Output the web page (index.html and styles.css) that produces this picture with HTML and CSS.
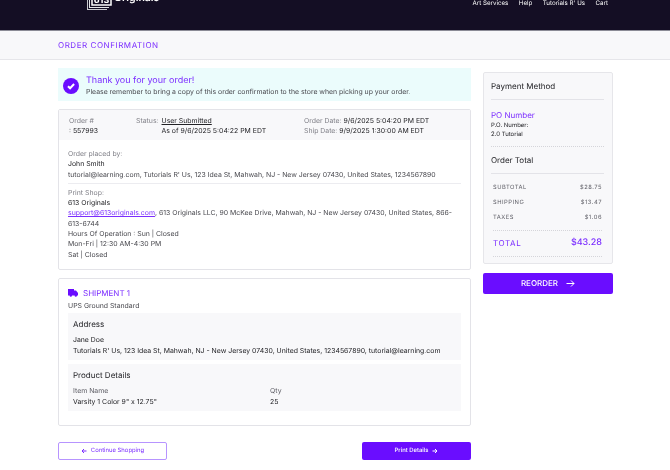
FILE: index.html
```html
<!DOCTYPE html>
<html lang="en">
<head>
  <meta charset="UTF-8">
  <title>Order Confirmation</title>
  <link rel="stylesheet" href="styles.css">
</head>
<body>
  <div class="header">
    <div class="logo">
      <svg class="logo-mark" width="25" height="22" viewBox="0 0 25 22">
        <path d="M0 5h1v16h19v1H0z" fill="#c9c9cf"/>
        <path d="M2 3h1v16h19v1H2z" fill="#e4e4e8"/>
        <rect x="5" y="0" width="19" height="17" fill="#140e24" stroke="#fff" stroke-width="1.500"/>
        <text class="logo-num" x="14.500" y="15" text-anchor="middle">613</text>
      </svg>
      <span class="logo-text">Originals</span>
    </div>
    <div class="nav">
      <span>Art Services</span>
      <span>Help</span>
      <span>Tutorials R' Us</span>
      <span>Cart</span>
    </div>
  </div>

  <div class="title-bar">ORDER CONFIRMATION</div>

  <div class="content">
    <div class="main">
      <div class="thanks">
        <div class="check">
          <svg width="10" height="10" viewBox="0 0 10 10"><path d="M2 5.200l2.100 2.100 4-4.300" fill="none" stroke="#fff" stroke-width="2"/></svg>
        </div>
        <div class="thanks-copy">
          <div class="thanks-title">Thank you for your order!</div>
          <div class="thanks-text">Please remember to bring a copy of this order confirmation to the store when picking up your order.</div>
        </div>
      </div>

      <div class="card order-card">
        <div class="order-head">
          <div class="col-order">
            <span class="label">Order #</span><br>
            : 557993
          </div>
          <div class="col-status">
            <span class="label">Status:</span>
            <div>
              <u>User Submitted</u><br>
              As of 9/6/2025 5:04:22 PM EDT
            </div>
          </div>
          <div class="col-dates">
            <span class="label">Order Date:</span> 9/6/2025 5:04:20 PM EDT<br>
            <span class="label">Ship Date:</span> 9/9/2025 1:30:00 AM EDT
          </div>
        </div>
        <div class="order-body">
          <div class="block placed">
            <span class="label">Order placed by:</span><br>
            <span class="name">John Smith</span><br>
            <span class="muted">tutorial@learning.com, Tutorials R' Us, 123 Idea St, Mahwah, NJ - New Jersey 07430, United States, 1234567890</span>
          </div>
          <div class="block">
            <span class="label">Print Shop:</span><br>
            <span class="name">613 Originals</span><br>
            <span class="muted"><a href="#">support@613originals.com</a>, 613 Originals LLC, 90 McKee Drive, Mahwah, NJ - New Jersey 07430, United States, 866-613-6744<br>
            Hours Of Operation : Sun | Closed<br>
            Mon-Fri | 12:30 AM-4:30 PM<br>
            Sat | Closed</span>
          </div>
        </div>
      </div>

      <div class="card shipment">
        <div class="ship-title">
          <svg width="10" height="8" viewBox="0 0 10 8"><path d="M0 0h6v1.500h2L10 4v2.500H9a1.200 1.200 0 0 1-2.400 0H4a1.200 1.200 0 0 1-2.400 0H0z" fill="#6a0dff"/></svg>
          SHIPMENT 1
        </div>
        <div class="ship-method">UPS Ground Standard</div>
        <div class="panel">
          <div class="panel-title">Address</div>
          <div class="panel-text">Jane Doe<br>Tutorials R' Us, 123 Idea St, Mahwah, NJ - New Jersey 07430, United States, 1234567890, tutorial@learning.com</div>
        </div>
        <div class="panel">
          <div class="panel-title">Product Details</div>
          <div class="items">
            <span class="item-label">Item Name</span>
            <span class="item-label">Qty</span>
            <span>Varsity 1 Color 9" x 12.75"</span>
            <span>25</span>
          </div>
        </div>
      </div>

      <div class="actions">
        <a class="btn btn-outline" href="#">
          <svg width="6" height="6" viewBox="0 0 6 6"><path d="M5.500 3H1M3 1L1 3l2 2" fill="none" stroke="currentColor"/></svg>
          Continue Shopping
        </a>
        <a class="btn btn-solid" href="#">
          Print Details
          <svg width="6" height="6" viewBox="0 0 6 6"><path d="M.5 3H5M3 1l2 2-2 2" fill="none" stroke="currentColor"/></svg>
        </a>
      </div>
    </div>

    <div class="side">
      <div class="summary">
        <div class="summary-title">Payment Method</div>
        <div class="po">
          <div class="po-title">PO Number</div>
          <div class="po-text">P.O. Number:<br>2.0 Tutorial</div>
        </div>
        <div class="summary-title">Order Total</div>
        <div class="totals">
          <div class="row"><span>SUBTOTAL</span><span>$28.75</span></div>
          <div class="row"><span>SHIPPING</span><span>$13.47</span></div>
          <div class="row"><span>TAXES</span><span>$1.06</span></div>
        </div>
        <div class="grand"><span>TOTAL</span><span class="grand-value">$43.28</span></div>
      </div>
      <a class="reorder" href="#">
        REORDER
        <svg width="9" height="9" viewBox="0 0 9 9"><path d="M.5 4.500H8M5 1.500l3 3-3 3" fill="none" stroke="currentColor"/></svg>
      </a>
    </div>
  </div>
</body>
</html>
```

FILE: styles.css
```css
* {
  box-sizing: border-box;
}

html,
body {
  height: 470px;
  overflow: hidden;
}

body {
  margin: 0;
  background: white;
  color: #222226;
  font-family: Inter, "Liberation Sans", sans-serif;
  font-size: 6.900px;
  line-height: 10.300px;
  text-rendering: geometricPrecision;
}

/* the reference is a scaled down capture, so its edges are a little soft */
.header,
.title-bar,
.content {
  filter: blur(0.3px);
}

.header {
  height: 31px;
  background: #140e24;
  border-bottom: 1px solid #8b8b96;
  display: flex;
  justify-content: space-between;
  padding: 0 62px 0 87px;
  overflow: hidden;
  color: white;
}

.logo {
  display: flex;
  align-items: flex-start;
  margin-top: -12px;
}

.logo-num {
  fill: white;
  font-size: 9px;
  font-weight: 700;
}

.logo-text {
  margin: 5px 0 0 2px;
  font-size: 10.500px;
  font-weight: 600;
  line-height: 10px;
}

.nav {
  display: flex;
  gap: 10.500px;
  font-size: 6.200px;
  line-height: 7px;
}

.title-bar {
  height: 29px;
  background: #f8f8fa;
  border-bottom: 1px solid #e6e6ea;
  padding: 9px 0 0 58px;
  color: #7b2dff;
  font-size: 8px;
  letter-spacing: 0.550px;
}

.content {
  display: flex;
  padding: 8px 57px 0 58px;
  gap: 12px;
}

.main {
  width: 413px;
}

.side {
  width: 130px;
  padding-top: 4px;
}

.thanks {
  height: 33px;
  background: #ebfcfc;
  display: flex;
  align-items: center;
  gap: 7px;
  padding: 2px 0 0 5px;
  margin-bottom: 8px;
}

.thanks-copy {
  padding-top: 2px;
}

.check {
  width: 16px;
  height: 16px;
  border-radius: 50%;
  background: #6a0dff;
  display: flex;
  align-items: center;
  justify-content: center;
}

.thanks-title {
  color: #7b2dff;
  font-size: 9px;
  line-height: 12px;
}

.thanks-text {
  color: #48484e;
}

.card {
  border: 1px solid #e3e3e8;
  border-radius: 2px;
}

.order-card {
  margin-bottom: 8px;
}

.order-head {
  height: 30px;
  background: #f8f8fa;
  display: flex;
  padding: 6px 10px 0 10px;
}

.label {
  color: #808088;
}

.col-order {
  width: 67px;
}

.col-status {
  width: 168px;
  display: flex;
  gap: 3px;
}

.order-body {
  padding: 9px 9px 9px 9px;
  color: #48484e;
}

.name {
  color: #222226;
}

.muted a {
  color: #7b2dff;
}

.placed {
  border-bottom: 1px solid #ececf0;
  padding-bottom: 3px;
  margin-bottom: 4px;
}

.shipment {
  height: 148px;
  padding: 9px 9px 0;
  margin-bottom: 16px;
}

.ship-title {
  display: flex;
  align-items: center;
  gap: 5px;
  color: #7b2dff;
  font-size: 8px;
  line-height: 11px;
}

.ship-method {
  color: #48484e;
  margin-top: 2px;
  margin-bottom: 2px;
}

.panel {
  background: #f8f8fa;
  height: 47px;
  padding: 6px 5px 0;
  margin-bottom: 4px;
}

.panel-title {
  font-size: 8px;
  line-height: 11px;
  margin-bottom: 5px;
}

.items {
  display: grid;
  grid-template-columns: 197px 1fr;
}

.item-label {
  color: #5c5c64;
}

.actions {
  display: flex;
  justify-content: space-between;
}

.btn {
  width: 109px;
  height: 18px;
  border-radius: 2px;
  display: flex;
  align-items: center;
  justify-content: center;
  gap: 4px;
  font-size: 5.900px;
  text-decoration: none;
}

.btn-outline {
  border: 1px solid #b794ff;
  color: #7b2dff;
}

.btn-solid {
  background: #6a0dff;
  color: white;
  font-weight: 500;
}

.summary {
  height: 192px;
  background: #f8f8fa;
  border: 1px solid #e6e6ea;
  border-radius: 2px;
  padding: 7px 8px 0 7px;
}

.summary-title {
  font-size: 8px;
  line-height: 12px;
  padding-bottom: 7px;
  border-bottom: 1px solid #e3e3e8;
}

.po {
  padding: 10px 0 6px;
  border-bottom: 1px dotted #d5d5da;
  margin-bottom: 7px;
}

.po-title {
  color: #7b2dff;
  font-size: 8px;
  line-height: 11px;
}

.po-text {
  font-size: 6px;
  line-height: 9.300px;
}

.totals {
  padding: 6px 0 4px;
  border-bottom: 1px dotted #d5d5da;
  margin: 0 2px;
}

.row {
  display: flex;
  justify-content: space-between;
  font-size: 5.800px;
  line-height: 15.400px;
  letter-spacing: 0.500px;
  color: #5c5c64;
}

.grand {
  margin: 0 2px;
  height: 26px;
  display: flex;
  justify-content: space-between;
  align-items: center;
  color: #7b2dff;
  font-size: 8px;
  letter-spacing: 0.600px;
  border-bottom: 1px dotted #d5d5da;
}

.grand-value {
  font-size: 9px;
  font-weight: 500;
  letter-spacing: 0;
}

.reorder {
  height: 21px;
  margin-top: 9px;
  background: #6a0dff;
  border-radius: 2px;
  color: white;
  font-size: 8px;
  font-weight: 500;
  display: flex;
  align-items: center;
  justify-content: center;
  gap: 8px;
  text-decoration: none;
}
```
